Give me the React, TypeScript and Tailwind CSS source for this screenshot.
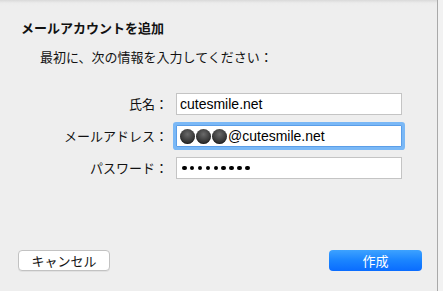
import React from "react";

const jp = { fontFamily: '"Noto Sans CJK JP", "Liberation Sans", sans-serif' };
const latin = { fontFamily: '"Liberation Sans", "Noto Sans CJK JP", sans-serif' };

function Ball() {
  return (
    <span className="w-[15px] h-[15px] rounded-full shrink-0 bg-[radial-gradient(circle_at_50%_35%,#6a6a6a_0%,#3a3a3a_55%,#1e1e1e_100%)] shadow-[inset_0_-1px_1px_rgba(0,0,0,0.4)]" />
  );
}

export default function App() {
  return (
    <div className="w-[443px] h-[291px] flex bg-[#f0f0f0] overflow-hidden">
      {/* dialog body */}
      <div className="w-[437px] h-full flex flex-col bg-[linear-gradient(to_bottom,#d9d9d9_0px,#ececec_3px,#eeeeee_6px)] pt-[20px] pb-[20px] text-[#111]" style={jp}>
        <p className="pl-[21px] text-[13px] leading-[16px] font-bold">メールアカウントを追加</p>
        <p className="pl-[40px] mt-[13px] text-[13px] leading-[16px]">最初に、次の情報を入力してください：</p>

        <div className="mt-[28px] grid grid-cols-[168px_226px] gap-x-[8px] gap-y-[10px] items-center text-[13px]">
          <span className="text-right leading-[22px]">氏名：</span>
          <div className="h-[22px] bg-white border border-[#c4c4c4] flex items-center pl-[3px] text-[14px] text-black" style={latin}>
            cutesmile.net
          </div>

          <span className="text-right leading-[22px]">メールアドレス：</span>
          <div className="h-[22px] bg-white border border-[#5b9ee8] flex items-center pl-[3px] text-[14px] text-black shadow-[0_0_0_3px_#7ab8f6] rounded-[1px]" style={latin}>
            <span className="flex gap-[1px] mr-[1px]">
              <Ball />
              <Ball />
              <Ball />
            </span>
            @cutesmile.net
          </div>

          <span className="text-right leading-[22px]">パスワード：</span>
          <div className="h-[22px] bg-white border border-[#c4c4c4] flex items-center pl-[5px] gap-[3.4px]">
            {Array.from({ length: 9 }).map((_, i) => (
              <span key={i} className="w-[4.5px] h-[4.5px] rounded-full bg-black" />
            ))}
          </div>
        </div>

        <div className="mt-auto flex justify-between pl-[18px] pr-[15px]">
          <button className="w-[92px] h-[21px] bg-white border border-[#c2c2c2] rounded-[4px] text-[13px] leading-[19px] text-[#111] shadow-[0_1px_0_rgba(0,0,0,0.05)]">
            キャンセル
          </button>
          <button className="w-[93px] h-[21px] rounded-[4px] text-[13px] leading-[21px] text-white bg-[linear-gradient(to_bottom,#3da2ff,#1a84ff_50%,#0a6cff)]">
            作成
          </button>
        </div>
      </div>
      {/* window edge */}
      <div className="w-[1px] h-full bg-[#a9a9a9]" />
      <div className="flex-1 h-full bg-[#f2f2f2]" />
    </div>
  );
}
